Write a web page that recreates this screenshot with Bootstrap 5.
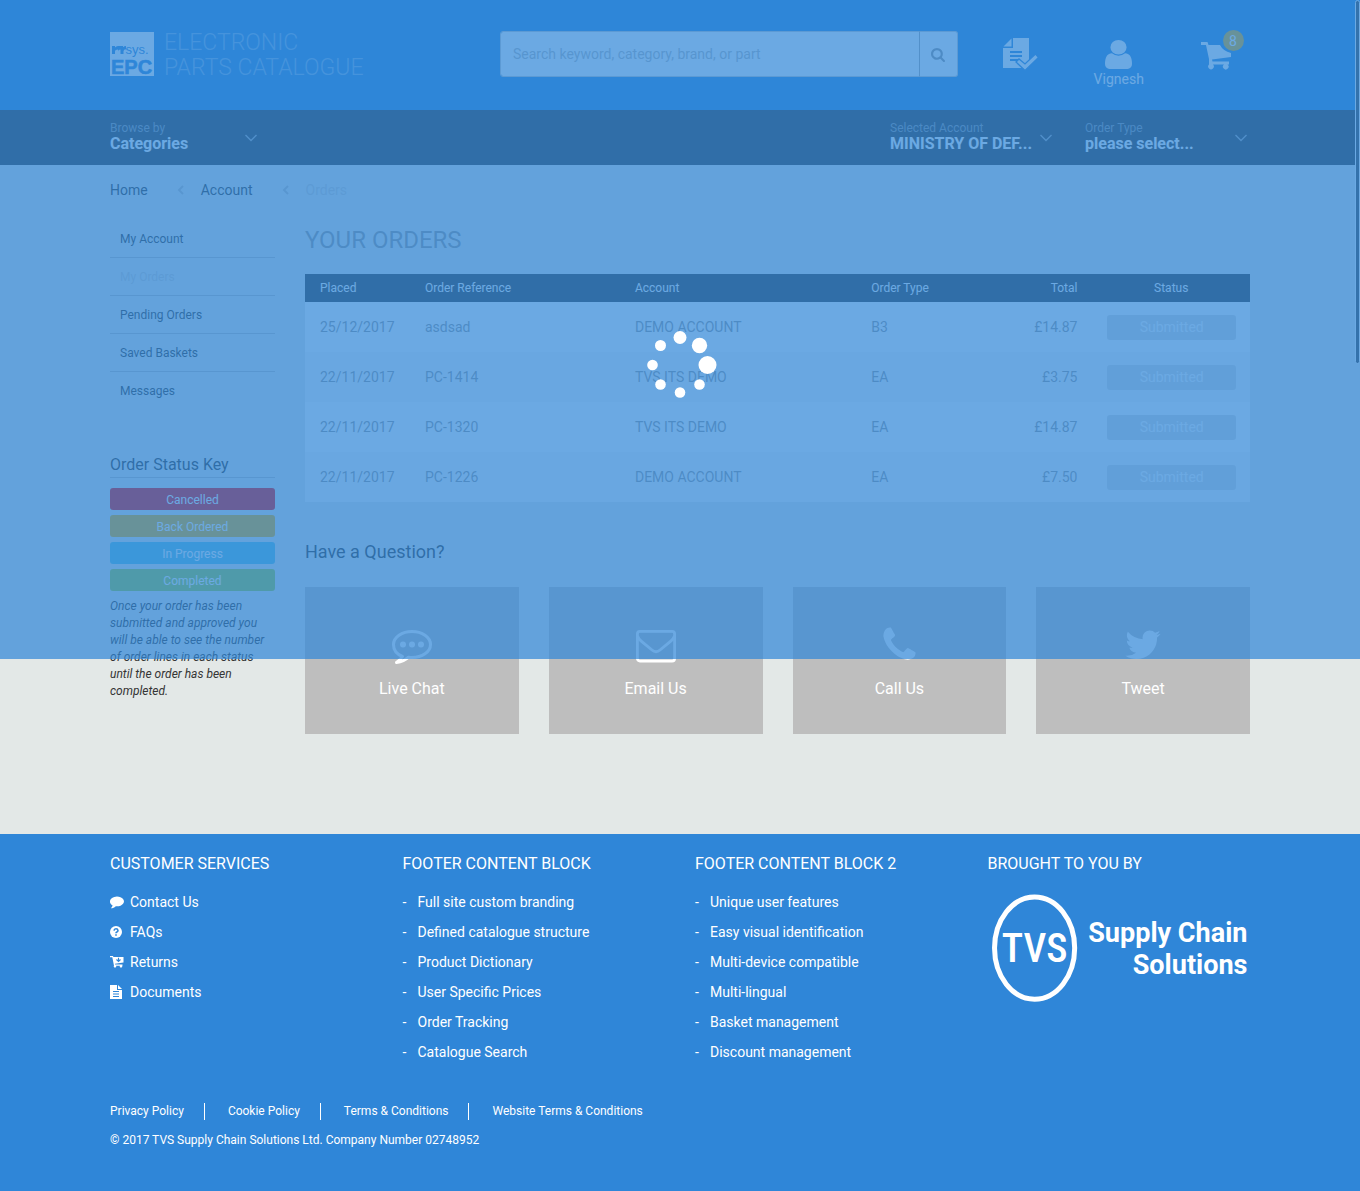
<!DOCTYPE html>
<html lang="en">
<head>
<meta charset="utf-8">
<meta name="viewport" content="width=device-width, initial-scale=1">
<title>Your Orders</title>
<link rel="stylesheet" href="https://cdn.jsdelivr.net/npm/bootstrap@5.3.0/dist/css/bootstrap.min.css">
<style>
:root{--brand:#2f86d8;--ink:#353535;--soft:#999;--rule:#bebebe}
body{font-family:Roboto,"Liberation Sans",sans-serif;font-size:14px;line-height:20px;color:var(--ink);background:#e3e8e7}
a{color:inherit;text-decoration:none}
.container{max-width:1170px;--bs-gutter-x:30px}
.row{--bs-gutter-x:30px}
.row.g-0{--bs-gutter-x:0px}
.container>.row{margin-left:-15px;margin-right:-15px}
.site-head{background:var(--brand);color:#fff;height:110px}
.brand-link{padding-top:30px;gap:10px}
.brand-tile{width:44px;height:44px;margin-top:2px;overflow:visible}
.brand-words{font-weight:300;font-size:23px;line-height:25px;color:#7db4e6}
.find-box{margin-top:31px;height:46px}
.find-box .form-control{font-size:14px;border:1px solid #ccc;border-radius:3px 0 0 3px;padding:0 12px}
.find-box .form-control::placeholder{color:#bbb}
.find-box .btn{width:39px;padding:0;border:1px solid #ccc;border-left-color:#aaa;background:#fff;color:var(--soft);border-radius:0 3px 3px 0}
.head-link{height:110px;padding-top:38px}
.head-link.person{padding-top:40px}
.basket-count{position:absolute;top:30px;left:55px;width:21px;height:21px;border-radius:50%;background:#f5b000;line-height:22px;text-align:center}
.menu-bar{background:var(--ink);height:55px;color:#fff}
.menu-btn{background:none;border:0;padding:11px 0 0;height:55px;color:#fff;text-align:left}
.menu-btn small{display:block;font-size:12px;line-height:15px;color:#8f9296}
.menu-btn strong{display:block;font-size:16px;line-height:16px;font-weight:700}
.menu-btn svg{color:#a0a4a8;margin:13px 18px 0 0}
.menu-btn.account svg,.menu-btn.kind svg{margin-right:3px}
.trail{padding-top:15px;height:55px;color:var(--ink)}
.trail svg{margin:0 17px 0 29px;color:var(--rule)}
.trail .here,.side-nav .here{color:#ccc}
.side-nav{font-size:12px;line-height:17px;margin-bottom:43px}
.side-nav a{padding:11px 10px 9px;border-bottom:1px solid var(--rule)}
.side-nav a:last-child{border-bottom:0}
.key-title{font-size:16px;line-height:25px;margin:0 0 10px;border-bottom:1px solid var(--rule);font-weight:400}
.key-tag{font-size:12px;line-height:22px;height:22px;margin-bottom:5px;border-radius:3px;color:#fff;text-align:center;padding-top:1px}
.tag-off{background:#f50000}.tag-back{background:#f5b000}.tag-run{background:#5bc0de}.tag-done{background:#a0cc3c}
.key-note{font-size:12px;line-height:17px;font-style:italic;padding-top:2px}
h1{font-size:24px;line-height:30px;color:var(--soft);font-weight:400;margin:5px 0 19px}
.order-table{width:100%;table-layout:fixed;background:#fff;color:var(--soft)}
.order-table th{background:var(--ink);color:#fff;font-weight:400;font-size:12px;height:28px;padding:0 15px}
.order-table td{height:50px;padding:0 15px}
.order-table tbody tr:nth-child(even){background:#f9f9f9}
.order-table .c-place{width:11.11%}.order-table .c-ref{width:22.22%}.order-table .c-acc{width:25%}
.order-table .c-mid{width:12.5%}
.state{height:25px;line-height:25px;background:#dcdcdc;color:#fff;border-radius:3px;text-align:center;margin-right:-1px}
h2{font-size:18px;line-height:24px;font-weight:400;margin:38px 0 23px}
.ask{background:var(--rule);color:#fff;height:147px;font-size:16px;line-height:20px;padding-top:39px;gap:11px}
.page-body{padding-bottom:100px}
.site-foot{background:var(--brand);color:#fff;padding-top:20px}
.site-foot h3{font-size:16px;line-height:20px;font-weight:400;margin:0 0 13px}
.site-foot li{height:30px;line-height:30px}
.site-foot .foot-ic{width:20px}
.site-foot .foot-dash{width:15px}
.foot-blocks{min-height:249px}
.legal{font-size:12px;line-height:17px}
.legal a+a{border-left:1px solid #fff;margin-left:20px;padding-left:23px}
.loading{position:absolute;top:0;left:0;right:0;height:659px;background:rgba(47,134,216,.71);z-index:20}
.loading svg{position:absolute;top:325px;left:50%;margin-left:-40px}
.rail{position:absolute;top:0;right:0;width:5px;height:364px;background:#424242;border:1px solid #fff;border-radius:5px;z-index:10}
</style>
<script src="https://cdn.jsdelivr.net/npm/bootstrap@5.3.0/dist/js/bootstrap.bundle.min.js"></script>
</head>
<body class="position-relative d-flex flex-column min-vh-100">
<header class="site-head">
 <div class="container"><div class="row">
  <div class="col-4">
   <a href="#" class="brand-link d-flex">
    <svg class="brand-tile" viewBox="0 0 44 44" aria-hidden="true"><rect width="44" height="44" fill="#fff"/><g fill="#2f86d8" font-family="Liberation Sans,sans-serif"><path d="M2 14h3v1.500q1-1.500 3-1.500h5v1.200q1.200-1.200 3-1.200v3.200q-2.500 0-2.500 2V22h-3v-4.500q-2.500 0-2.500 2V22H8v-4.500q-3 0-3 2V22H2z"/><text x="15.500" y="22" font-size="13">sys.</text><text x="1" y="42" font-size="20" font-weight="700" stroke="#2f86d8" stroke-width=".6">EPC</text></g></svg>
    <span class="brand-words text-nowrap">ELECTRONIC<br>PARTS CATALOGUE</span>
   </a>
  </div>
  <div class="col-5">
   <form class="find-box input-group" role="search">
    <input class="form-control" type="search" aria-label="Search" placeholder="Search keyword, category, brand, or part">
    <button class="btn" type="button" aria-label="Search"><svg width="14" height="14" viewBox="64 128 1664 1664" fill="currentColor"><path d="M1216 832q0-185-131.500-316.500t-316.500-131.500-316.500 131.500-131.500 316.500 131.500 316.500 316.500 131.500 316.500-131.500 131.500-316.500zm512 832q0 52-38 90t-90 38q-54 0-90-38l-343-342q-179 124-399 124-143 0-273.500-55.500t-225-150-150-225-55.500-273.500 55.500-273.500 150-225 225-150 273.500-55.500 273.500 55.500 225 150 150 225 55.500 273.500q0 220-124 399l343 343q37 37 37 90z"/></svg></button>
   </form>
  </div>
  <div class="col-3 px-0"><div class="row g-0">
   <a href="#" class="col-4 head-link text-center" aria-label="Approvals"><svg width="36" height="33" viewBox="0 0 36 33"><path d="M10 0h16v30H0V10h10z" fill="#fff"/><path d="M8.500.5v8H.5z" fill="#fff"/><path d="M7 14h12M7 18h12M7 22h8" stroke="#2f86d8" stroke-width="1.800"/><path d="M13 24l3-3 6 5L32.500 16l3 3.500L22 32.500z" fill="#fff" stroke="#2f86d8" stroke-width="1.300"/></svg></a>
   <a href="#" class="col-4 head-link person d-flex flex-column align-items-center"><svg width="27" height="29" viewBox="256 128 1280 1536" preserveAspectRatio="none" fill="#fff"><path d="M1536 1399q0 109-62.500 187t-150.500 78h-854q-88 0-150.500-78t-62.500-187q0-85 8.500-160.500t31.500-152 58.500-131 94-89 134.500-34.500q131 128 313 128t313-128q76 0 134.500 34.500t94 89 58.500 131 31.500 152 8.500 160.500zm-256-887q0 159-112.500 271.500t-271.500 112.500-271.500-112.500-112.500-271.500 112.500-271.500 271.500-112.500 271.500 112.500 112.500 271.500z"/></svg><span>Vignesh</span></a>
   <a href="#" class="col-4 head-link person text-center position-relative" aria-label="Basket"><svg width="31" height="32" viewBox="0 1 31 32" fill="#fff"><path d="M0 3h6.500l1 3H19q3 6 11 8v4l-19 2.500.5 2H28v3h-1.500a2.800 2.800 0 1 1-3.500 0H12a2.800 2.800 0 1 1-4 0V20L5 6H0z"/></svg><span class="basket-count">8</span></a>
  </div></div>
 </div></div>
</header>
<nav class="menu-bar">
 <div class="container"><div class="row">
  <div class="col-2"><button type="button" class="menu-btn w-100 d-flex justify-content-between"><span><small>Browse by</small><strong>Categories</strong></span><svg width="12" height="8" viewBox="0 0 12 8" fill="none" stroke="currentColor" stroke-width="1.400"><path d="M.5 1L6 6.500 11.500 1"/></svg></button></div>
  <div class="col-2 offset-6"><button type="button" class="menu-btn account w-100 d-flex justify-content-between"><span class="text-nowrap"><small>Selected Account</small><strong>MINISTRY OF DEF...</strong></span><svg width="12" height="8" viewBox="0 0 12 8" fill="none" stroke="currentColor" stroke-width="1.400"><path d="M.5 1L6 6.500 11.500 1"/></svg></button></div>
  <div class="col-2"><button type="button" class="menu-btn kind w-100 d-flex justify-content-between"><span><small>Order Type</small><strong>please select...</strong></span><svg width="12" height="8" viewBox="0 0 12 8" fill="none" stroke="currentColor" stroke-width="1.400"><path d="M.5 1L6 6.500 11.500 1"/></svg></button></div>
 </div></div>
</nav>
<main class="page-body"><div class="container">
 <nav class="trail d-flex align-items-start" aria-label="breadcrumb">
  <a href="#">Home</a><svg width="7" height="20" viewBox="0 0 7 20" fill="none" stroke="currentColor" stroke-width="2"><path d="M6 6L2 10l4 4"/></svg><a href="#">Account</a><svg width="7" height="20" viewBox="0 0 7 20" fill="none" stroke="currentColor" stroke-width="2"><path d="M6 6L2 10l4 4"/></svg><span class="here">Orders</span>
 </nav>
 <div class="row">
  <aside class="col-2">
   <nav class="side-nav d-flex flex-column"><a href="#">My Account</a><a href="#" class="here">My Orders</a><a href="#">Pending Orders</a><a href="#">Saved Baskets</a><a href="#">Messages</a></nav>
   <h2 class="key-title">Order Status Key</h2>
   <div class="key-tag tag-off">Cancelled</div><div class="key-tag tag-back">Back Ordered</div><div class="key-tag tag-run">In Progress</div><div class="key-tag tag-done">Completed</div>
   <p class="key-note mb-0">Once your order has been submitted and approved you will be able to see the number of order lines in each status until the order has been completed.</p>
  </aside>
  <section class="col-10">
   <h1>YOUR ORDERS</h1>
   <table class="order-table">
    <thead><tr><th class="c-place">Placed</th><th class="c-ref">Order Reference</th><th class="c-acc">Account</th><th class="c-mid">Order Type</th><th class="c-mid text-end">Total</th><th class="text-center">Status</th></tr></thead>
    <tbody>
     <tr><td>25/12/2017</td><td>asdsad</td><td>DEMO ACCOUNT</td><td>B3</td><td class="text-end">£14.87</td><td><div class="state">Submitted</div></td></tr>
     <tr><td>22/11/2017</td><td>PC-1414</td><td>TVS ITS DEMO</td><td>EA</td><td class="text-end">£3.75</td><td><div class="state">Submitted</div></td></tr>
     <tr><td>22/11/2017</td><td>PC-1320</td><td>TVS ITS DEMO</td><td>EA</td><td class="text-end">£14.87</td><td><div class="state">Submitted</div></td></tr>
     <tr><td>22/11/2017</td><td>PC-1226</td><td>DEMO ACCOUNT</td><td>EA</td><td class="text-end">£7.50</td><td><div class="state">Submitted</div></td></tr>
    </tbody>
   </table>
   <h2>Have a Question?</h2>
   <div class="row">
    <div class="col-3"><a href="#" class="ask d-flex flex-column align-items-center"><svg width="42" height="42" viewBox="0 1 42 42"><path d="M11.500 31.500C5 29 2.500 24 2.500 19.500 2.500 12 11 6.500 21 6.500s18.500 5.500 18.500 13S31 32.500 21 32.500q-2 0-3.500-.3Q13 36.500 5.500 37.500q4-3 6-6z" fill="none" stroke="#fff" stroke-width="3" stroke-linejoin="round"/><g fill="#fff"><circle cx="12" cy="19.500" r="3"/><circle cx="21" cy="19.500" r="3"/><circle cx="30" cy="19.500" r="3"/></g></svg>Live Chat</a></div>
    <div class="col-3"><a href="#" class="ask d-flex flex-column align-items-center"><svg width="42" height="42" viewBox="0 0 42 42" fill="none" stroke="#fff" stroke-width="2.800" stroke-linejoin="round"><rect x="2.400" y="5.400" width="37.200" height="29.600" rx="2.500"/><path d="M2.500 10q1 3 4 5.300L17 24q4 3.500 8 0l10.500-8.700q3-2.300 4-5.300"/></svg>Email Us</a></div>
    <div class="col-3"><a href="#" class="ask d-flex flex-column align-items-center"><svg width="42" height="42" viewBox="-45 60 1840 1840" fill="#fff"><path d="M1600 1240q0 27-10 70.500t-21 68.500q-21 50-122 106-94 51-186 51-27 0-52.500-3.500t-57.500-12.500-47.500-14.500-55.500-20.500-49-18q-98-35-175-83-128-79-264.500-215.500t-215.500-264.500q-48-77-83-175-3-9-18-49t-20.500-55.500-14.500-47.500-12.500-57.500-3.500-52.500q0-92 51-186 56-101 106-122 25-11 68.500-21t70.500-10q14 0 21 3 18 6 53 76 11 19 30 54t35 63.500 31 53.500q3 4 17.500 25t21.500 35.500 7 28.500q0 20-28.500 50t-62 55-62 53-28.500 46q0 9 5 22.500t8.500 20.500 14 24 11.500 19q76 137 174 235t235 174q2 1 19 11.500t24 14 20.500 8.500 22.500 5q18 0 46-28.500t53-62 55-62 50-28.500q14 0 28.500 7t35.500 21.500 25 17.500q25 15 53.500 31t63.500 35 54 30q70 35 76 53 3 7 3 21z"/></svg>Call Us</a></div>
    <div class="col-3"><a href="#" class="ask d-flex flex-column align-items-center"><svg width="42" height="42" viewBox="-45 60 1880 1880" fill="#fff"><path d="M1684 408q-67 98-162 167 1 14 1 42 0 130-38 259.500t-115.500 248.500-184.500 210.500-258 146-323 54.500q-271 0-496-145 35 4 78 4 225 0 401-138-105-2-188-64.500t-114-159.500q33 5 61 5 43 0 85-11-112-23-185.500-111.500t-73.500-205.500v-4q68 38 146 41-66-44-105-115t-39-154q0-88 44-163 121 149 294.500 238.500t371.500 99.500q-8-38-8-74 0-134 94.500-228.500t228.500-94.500q140 0 236 102 109-21 205-78-37 115-142 178 93-10 186-50z"/></svg>Tweet</a></div>
   </div>
  </section>
 </div>
</div></main>
<footer class="site-foot flex-grow-1"><div class="container">
 <div class="row foot-blocks">
  <div class="col-3"><h3>CUSTOMER SERVICES</h3>
   <ul class="list-unstyled mb-0">
    <li><a href="#" class="d-flex align-items-center"><span class="foot-ic d-flex"><svg width="14" height="14" viewBox="0 128 1792 1700" fill="#fff"><path d="M1792 896q0 174-120 321.500t-326 233-450 85.500q-70 0-145-8-198 175-460 242-49 14-114 22-17 2-30.500-9t-17.500-29q30-50 90-110 60-70 117-225-157-89-247.500-220t-90.500-281q0-130 71-248.500t191-204.500 286-136.500 348-50.500q244 0 450 85.500t326 233 120 321.500z"/></svg></span>Contact Us</a></li>
    <li><a href="#" class="d-flex align-items-center"><span class="foot-ic d-flex"><svg width="12" height="12" viewBox="0 0 12 12"><circle cx="6" cy="6" r="6" fill="#fff"/><path d="M4 4.600Q4.200 2.800 6 2.800t2 1.700Q8 5.500 6.900 6 6 6.400 6 7.200M6 8.200v1.600" fill="none" stroke="#2f86d8" stroke-width="1.600"/></svg></span>FAQs</a></li>
    <li><a href="#" class="d-flex align-items-center"><span class="foot-ic d-flex"><svg width="14" height="12" viewBox="0 0 14 12"><path d="M0 0h3l.4 1H13.500v5.500L5 7.700V8.500h7.500v1.300h-.5a1.200 1.200 0 1 1-2 0H6a1.200 1.200 0 1 1-2 0L2.300 1.300H0z" fill="#fff"/><path d="M8.500 1.800v3M6.500 3.500l2 2 2-2" stroke="#2f86d8" stroke-width="1.100" fill="none"/></svg></span>Returns</a></li>
    <li><a href="#" class="d-flex align-items-center"><span class="foot-ic d-flex"><svg width="12" height="14" viewBox="0 0 12 14"><path d="M0 0h7v5h5v9H0zM8 0l4 4H8z" fill="#fff"/><path d="M3 6.500h6M3 9h6M3 11.500h6" stroke="#2f86d8"/></svg></span>Documents</a></li>
   </ul></div>
  <div class="col-3"><h3>FOOTER CONTENT BLOCK</h3>
   <ul class="list-unstyled mb-0">
    <li class="d-flex"><span class="foot-dash">-</span>Full site custom branding</li><li class="d-flex"><span class="foot-dash">-</span>Defined catalogue structure</li><li class="d-flex"><span class="foot-dash">-</span>Product Dictionary</li><li class="d-flex"><span class="foot-dash">-</span>User Specific Prices</li><li class="d-flex"><span class="foot-dash">-</span>Order Tracking</li><li class="d-flex"><span class="foot-dash">-</span>Catalogue Search</li>
   </ul></div>
  <div class="col-3"><h3>FOOTER CONTENT BLOCK 2</h3>
   <ul class="list-unstyled mb-0">
    <li class="d-flex"><span class="foot-dash">-</span>Unique user features</li><li class="d-flex"><span class="foot-dash">-</span>Easy visual identification</li><li class="d-flex"><span class="foot-dash">-</span>Multi-device compatible</li><li class="d-flex"><span class="foot-dash">-</span>Multi-lingual</li><li class="d-flex"><span class="foot-dash">-</span>Basket management</li><li class="d-flex"><span class="foot-dash">-</span>Discount management</li>
   </ul></div>
  <div class="col-3"><h3>BROUGHT TO YOU BY</h3>
   <svg class="w-100" viewBox="0 0 262 120" role="img" aria-label="TVS Supply Chain Solutions"><ellipse cx="46.500" cy="61" rx="40" ry="51" fill="none" stroke="#fff" stroke-width="5"/><g fill="#fff" font-family="Roboto,sans-serif"><text x="46.500" y="75" font-family="Roboto Condensed,Liberation Sans Narrow,Roboto,sans-serif" font-size="40" font-weight="500" text-anchor="middle">TVS</text><g font-size="27" font-weight="700" text-anchor="end"><text x="259" y="55">Supply Chain</text><text x="259" y="87">Solutions</text></g></g></svg>
  </div>
 </div>
 <div class="legal d-flex"><a href="#">Privacy Policy</a><a href="#">Cookie Policy</a><a href="#">Terms &amp; Conditions</a><a href="#">Website Terms &amp; Conditions</a></div>
 <p class="legal pt-2 mt-1 mb-0">© 2017 TVS Supply Chain Solutions Ltd. Company Number 02748952</p>
</div></footer>
<div class="rail"></div>
<div class="loading" role="status" aria-label="Loading"><svg width="80" height="80" viewBox="0 0 80 80" fill="#fff"><circle cx="40" cy="12.500" r="6.500"/><circle cx="59.500" cy="20.500" r="7.700"/><circle cx="67.500" cy="40" r="9"/><circle cx="59.500" cy="59.500" r="5.300"/><circle cx="40" cy="67.500" r="5.300"/><circle cx="20.500" cy="59.500" r="5.300"/><circle cx="12.500" cy="40" r="5.300"/><circle cx="20.500" cy="20.500" r="5.500"/></svg></div>
</body>
</html>
